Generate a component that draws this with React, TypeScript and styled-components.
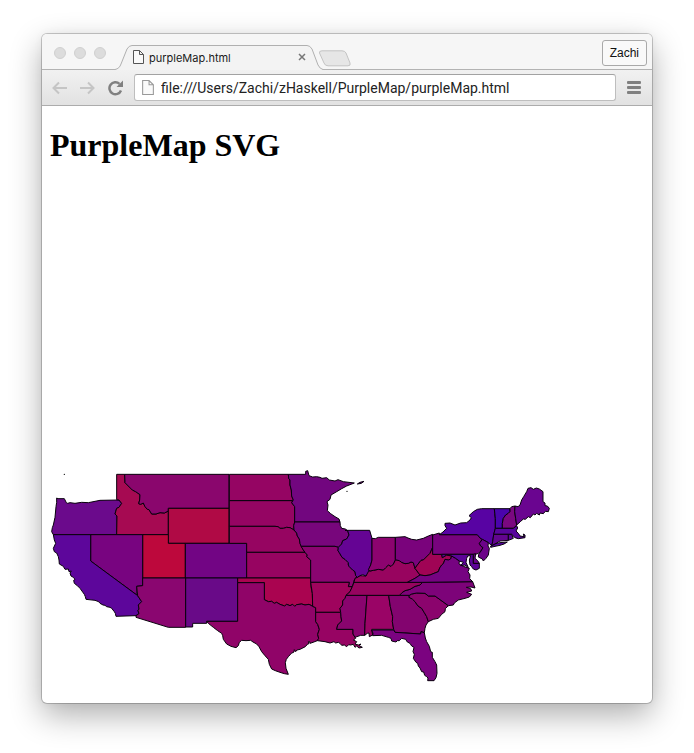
import React from "react";
import styled, { createGlobalStyle } from "styled-components";

const GlobalStyle = createGlobalStyle`
  * { box-sizing: border-box; }
  body { margin: 0; background: #fff; }
  button, input { font: inherit; color: inherit; }
`;

const Desktop = styled.div`
  display: flex;
  min-height: 100vh;
  padding: 34px 42px 50px;
`;

const BrowserWindow = styled.section`
  flex: 1;
  min-width: 0;
  display: flex;
  flex-direction: column;
  overflow: hidden;
  border-radius: 5px;
  background: #fff;
  box-shadow: 0 0 0 1px rgba(0, 0, 0, 0.2), 0 12px 32px rgba(0, 0, 0, 0.32), 0 0 10px rgba(0, 0, 0, 0.05);
`;

const TabStrip = styled.header`
  display: flex;
  align-items: flex-end;
  height: 36px;
  padding: 0 5px 0 12px;
  background: #f6f6f6;
  box-shadow: inset 0 -1px #b3b3b3;
  font-family: Inter, "Liberation Sans", sans-serif;
`;

const WindowControls = styled.div`
  display: flex;
  align-self: center;
  gap: 8px;
  margin-top: 2px;
  margin-right: 9px;
`;

const WindowControl = styled.button`
  width: 12px;
  height: 12px;
  padding: 0;
  border: 1px solid #d0d0d0;
  border-radius: 50%;
  background: #dcdcdc;
`;

const Tab = styled.div`
  position: relative;
  display: flex;
  align-items: center;
  width: 208px;
  height: 26px;
  padding: 0 17px 0 18px;
  font-size: 11px;
  color: #1b1b1b;
`;

const TabShape = styled.svg`
  position: absolute;
  inset: 0;
  width: 100%;
  height: 100%;
`;

const TabIcon = styled.span`
  position: relative;
  display: flex;
`;

const TabTitle = styled.span`
  position: relative;
  flex: 1;
  margin-top: 2px;
  margin-left: 5px;
  white-space: nowrap;
`;

const IconButton = styled.button`
  position: relative;
  display: flex;
  align-items: center;
  justify-content: center;
  padding: 0;
  border: 0;
  background: none;
`;

const NewTab = styled(IconButton)`
  align-self: center;
  margin-top: 12px;
  margin-left: -5px;
`;

const Profile = styled.button`
  align-self: flex-start;
  height: 26px;
  margin-top: 6px;
  margin-left: auto;
  padding: 0 7px;
  border: 1px solid #a9a9a9;
  border-radius: 3px;
  background: #f9f9f9;
  font-family: "Liberation Sans", sans-serif;
  font-size: 12px;
  color: #111;
`;

const Toolbar = styled.nav`
  display: flex;
  align-items: center;
  gap: 11px;
  height: 36px;
  padding: 0 11px 0 9px;
  border-bottom: 1px solid #acacac;
  background: linear-gradient(#f1f1f1, #e2e2e2);
`;

const AddressBar = styled.label`
  flex: 1;
  min-width: 0;
  display: flex;
  align-items: center;
  gap: 7px;
  height: 27px;
  padding: 0 7px;
  border: 1px solid #bebebe;
  border-top-color: #a2a2a2;
  border-radius: 3px;
  background: #fff;
`;

const AddressInput = styled.input`
  flex: 1;
  min-width: 0;
  padding: 0;
  border: 0;
  outline: 0;
  background: none;
  font-family: Roboto, "Liberation Sans", sans-serif;
  font-size: 14px;
  color: #222;
`;

const Page = styled.main`
  flex: 1;
  padding: 21px 8px 8px;
`;

const Heading = styled.h1`
  margin: 0 0 21px;
  font: bold 32px/37px "Liberation Serif", serif;
  color: #000;
`;

const Map = styled.svg`
  display: block;
  width: 100%;
  max-width: 510px;
`;

const PageIcon = ({ stroke, large = false }: { stroke: string; large?: boolean }) => (
  <svg
    width={large ? 12 : 11}
    height={large ? 15 : 14}
    viewBox="0 0 11 14"
    fill="#fafafa"
    stroke={stroke}
  >
    <path d="M.5 .5H6.500L10.500 4.500V13.500H.5Z M6.500 .5V4.500H10.500" />
  </svg>
);

interface StateShape {
  id: string;
  fill: string;
  d: string;
}

const states: StateShape[] = [
  { id: "OR", fill: "#6b0a8c", d: "M20,99 24,101 43,101 49,113 53,115 60,113 75,115 95,112 115,113 150,106 207,105 215,115 207,127 200,130 195,147 201,153 200,209 10,209 5,200 7,188 10,180 15,157 18,125 20,112Z" },
  { id: "ID", fill: "#a60a52", d: "M200,28 224,28 225,53 232,60 247,75 257,80 270,89 269,105 266,116 272,118 280,114 285,125 292,133 297,134 305,147 318,147 330,143 343,144 355,138 355,209 200,209 201,153 195,147 200,130 207,127 215,115 207,105 200,104Z" },
  { id: "MT", fill: "#8a066d", d: "M224,28H537V130H355V138L343,144 330,143 318,147 305,147 297,134 292,133 285,125 280,114 272,118 266,116 269,105 270,89 257,80 247,75 232,60 225,53Z" },
  { id: "WY", fill: "#b00a45", d: "M355,130H537V235H355Z" },
  { id: "UT", fill: "#bd083c", d: "M278,209H355V235H406V339H278Z" },
  { id: "CO", fill: "#720584", d: "M406,235H590V339H406Z" },
  { id: "NV", fill: "#780480", d: "M122,209H278V362L260,364 261,385 263,392 122,288Z" },
  { id: "CA", fill: "#5d069b", d: "M10,209H122V288L263,392 275,410 265,420 267,432 264,437 267,446 258,452 198,454 196,445 193,440 185,430 180,427 170,425 165,421 159,420 150,415 146,410 135,406 108,403 106,395 103,388 90,370 82,362 73,355 71,346 75,343 70,337 63,333 60,324 64,318 57,320 55,312 45,313 40,304 28,297 27,285 25,275 20,264 13,260 10,250 17,235 13,225Z" },
  { id: "AZ", fill: "#8a0670", d: "M278,339H407V487H355L258,457 258,452 267,446 264,437 267,432 265,420 275,410 263,392 260,364 278,362Z" },
  { id: "NM", fill: "#690a88", d: "M407,339H563V469H470V475H428V486H407Z" },
  { id: "ND", fill: "#950563", d: "M538,28H715L716,40 720,45 720,60 724,75 725,93 730,105 728,107H538Z" },
  { id: "SD", fill: "#950563", d: "M538,107H728L725,113 734,125V173L731,182 732,195 720,188 710,187 700,190 690,190 684,185 675,184H538Z" },
  { id: "NE", fill: "#960561", d: "M538,184H675L684,185 690,190 700,190 710,187 720,188 732,195 740,204 742,213 748,222 750,235 755,245 760,255 765,262H590V235H538Z" },
  { id: "KS", fill: "#970461", d: "M590,262H765L772,270 770,275 782,285V339H590Z" },
  { id: "OK", fill: "#aa0450", d: "M563,339H782L783,365 787,385 788,424 777,418 765,420 755,417 740,419 734,424 728,418 720,422 710,418 704,423 690,418 680,412 673,415 665,409 655,410 643,404V353H563Z" },
  { id: "TX", fill: "#900468", d: "M563,353H643V404L655,410 665,409 673,415 680,412 690,418 704,423 710,418 720,422 728,418 734,424 740,419 755,417 765,420 777,418 788,424 797,428V470L803,478 808,493 803,508 806,520 802,527 789,532 780,535 779,530 775,530 777,536 773,537 766,545 750,553 741,555 737,560 733,554 732,561 724,565 715,575 709,583 706,593 708,610 715,628 703,626 690,622 676,617 665,612 658,598 655,583 645,572 635,560 627,545 620,537 609,531 602,526 588,527 575,526 568,532 565,542 558,548 543,544 530,537 520,523 518,512 515,505 503,497 490,487 475,475 470,469H563Z" },
  { id: "MN", fill: "#72067f", d: "M715,28H767V19L773,17 777,32 788,36 800,35 810,37 816,40 830,38 838,45 855,48 864,44 880,50 913,54 890,63 875,71 860,80 843,90 840,103 831,110 834,120 832,137 842,146 855,155 867,162 870,171H734V125L725,113 730,105 725,93 724,75 720,60 720,45 716,40Z" },
  { id: "IA", fill: "#78067c", d: "M734,171H870L871,182 875,190 886,192 893,197 897,210 890,222 878,227 875,237 865,247 855,244H753L750,235 748,222 742,213 740,204 732,195 731,182Z" },
  { id: "MO", fill: "#8a0570", d: "M753,244H855L865,247 864,257 868,263 876,277 885,283 895,293 895,300 898,305 908,315 915,320 917,332 922,337 915,340 912,347 910,355 907,365H895L898,352H782V285L770,275 772,270 765,262 760,255Z" },
  { id: "AR", fill: "#9f045d", d: "M782,352H898L895,365H907L900,380 890,390 885,400 878,408 878,420 870,430 872,442H797V428L788,424 787,385Z" },
  { id: "LA", fill: "#970463", d: "M797,442H872L873,455 875,468 863,480 860,493H909V507L917,520 910,525 920,530 915,537 925,540 933,537 928,542 937,547 927,549 920,543 915,547 910,538 902,540 896,539 890,545 883,540 875,541 870,535 865,532 857,534 852,530 846,532 840,534 825,530 810,528 802,527 806,520 803,508 808,493 803,478 797,470Z" },
  { id: "MS", fill: "#89046e", d: "M888,391H951L945,475 944,511 932,511 915,517 909,507V493H860L863,480 875,468 873,455 872,442 870,430 878,420 878,408 885,400Z" },
  { id: "AL", fill: "#9a0466", d: "M951,391H1016L1021,425 1028,455 1027,470 1031,493H965L968,510 958,515 957,504 952,505 944,511 945,475Z" },
  { id: "GA", fill: "#83046f", d: "M1016,391H1078L1077,397 1087,402 1095,410 1104,423 1115,430 1123,443 1130,455 1135,470 1128,480 1125,490 1123,503 1113,500 1112,507 1035,502 1031,493 1027,470 1028,455 1021,425Z" },
  { id: "FL", fill: "#7b0380", d: "M965,495H1031L1035,502 1112,507 1113,500 1123,503 1126,519 1130,530 1138,544 1142,560 1147,562 1147,577 1155,590 1160,600 1161,625 1158,638 1152,647 1133,647 1134,639 1130,635 1124,631 1121,621 1115,620 1110,609 1105,603 1103,595 1098,592 1090,580 1093,568 1089,560 1092,547 1085,543 1080,535 1072,531 1067,523 1055,520 1048,527 1042,527 1038,531 1025,528 1023,520 1015,517 995,511 968,512 969,505Z" },
  { id: "SC", fill: "#8b046d", d: "M1078,391 1085,387 1100,384 1125,385 1135,393 1155,393 1195,422 1186,431 1185,440 1175,448 1165,460 1150,463 1135,470 1130,455 1123,443 1115,430 1104,423 1095,410 1087,402 1077,397Z" },
  { id: "NC", fill: "#7d0379", d: "M1118,352 1268,350 1275,369 1263,366 1249,367 1262,371 1265,378 1250,382 1265,388 1258,396 1245,400 1225,405 1213,414 1210,420 1195,422 1155,393 1135,393 1125,385 1100,384 1085,387 1078,391H1048L1057,382 1065,377 1080,373 1095,364 1110,360Z" },
  { id: "TN", fill: "#96045f", d: "M912,352H1118L1110,360 1095,364 1080,373 1065,377 1057,382 1048,391H888L900,380 907,365Z" },
  { id: "KY", fill: "#98045f", d: "M915,340 922,337 930,332 948,333 950,319 960,318 970,316 985,313 1000,315 1007,308 1015,300 1023,304 1030,297 1037,284 1048,287 1055,292 1065,296 1075,295 1083,291 1090,293 1095,310 1110,330 1095,340 1072,352H912Z" },
  { id: "IL", fill: "#650494", d: "M885,196H959L966,220V285L962,300 955,320 948,333 938,329 930,332 922,337 917,332 915,320 908,315 898,305 895,300 895,293 885,283 876,277 868,263 864,257 865,247 875,237 878,227 890,222 897,210 893,197Z" },
  { id: "IN", fill: "#8c036f", d: "M966,220 976,221 985,217H1036V284L1030,297 1023,304 1015,300 1007,308 1000,315 985,313 970,316 960,318 955,314 962,300 966,285Z" },
  { id: "OH", fill: "#7a037c", d: "M1036,217 1065,215 1074,219 1085,223 1100,225 1120,220 1135,213 1148,208V247L1140,265 1132,273 1120,285 1113,286 1102,300 1095,310 1090,293 1083,291 1075,295 1065,296 1055,292 1048,287 1036,284Z" },
  { id: "WV", fill: "#a00455", d: "M1148,247V268H1175L1177,278 1190,270 1205,273 1202,282 1195,285 1185,283 1180,296 1175,300 1169,309 1165,320 1152,325 1140,330 1125,332 1110,330 1095,310 1102,300 1113,286 1120,285 1132,273 1140,265Z" },
  { id: "VA", fill: "#760381", d: "M1072,352 1095,340 1110,330 1125,332 1140,330 1152,325 1165,320 1169,309 1175,300 1180,296 1185,283 1195,285 1202,282 1205,273 1217,280 1228,288 1227,297 1240,304 1258,310 1254,320 1260,330 1259,341 1268,350 1118,352Z" },
  { id: "PA", fill: "#78037e", d: "M1148,210 1168,204V209H1282L1290,219 1297,223 1288,235 1292,243 1299,248 1293,258 1285,265 1277,268H1148Z" },
  { id: "NY", fill: "#5803a3", d: "M1168,209 1179,201 1190,190 1185,182V175L1200,174 1215,180 1232,174 1250,173 1260,165 1264,158 1257,152 1270,140 1282,133 1295,131H1333L1334,145 1336,160 1336,190 1331,210 1328,232 1325,242 1315,233 1297,223 1290,219 1282,209Z" },
  { id: "LI", fill: "#5803a3", d: "M1322,243 1337,236 1350,233 1372,231 1362,237 1350,241 1335,244 1322,247Z" },
  { id: "NJ", fill: "#6c0389", d: "M1297,223 1315,233 1314,243 1318,250 1315,270 1308,280 1300,288 1297,282 1285,276 1286,268 1293,258 1299,248 1292,243 1288,235Z" },
  { id: "VT", fill: "#4a04ac", d: "M1333,131H1380L1380,140 1375,145 1367,150 1360,160 1357,175 1357,190H1336V160Z" },
  { id: "NH", fill: "#7b0880", d: "M1380,131 1385,125 1395,123 1394,140 1397,160 1400,180 1390,190H1357V175L1360,160 1367,150 1375,145 1380,140Z" },
  { id: "ME", fill: "#6a0590", d: "M1395,123 1404,125 1410,120 1415,105 1421,95 1430,80 1434,70 1443,68 1450,73 1459,69 1468,72 1479,80V110L1485,114 1485,122 1492,123 1498,130 1495,140 1486,139 1480,146 1470,144 1468,150 1460,145 1455,150 1450,147 1441,158 1435,155 1426,163 1420,162 1411,170 1400,180 1397,160 1394,140Z" },
  { id: "MA", fill: "#57059c", d: "M1336,190H1390L1400,182 1403,189 1398,198 1405,205 1410,213 1422,215 1420,207 1425,210 1425,218 1405,221 1395,218 1385,208H1331Z" },
  { id: "CT", fill: "#63058f", d: "M1331,208H1375V226L1350,228 1338,235 1325,242 1328,230Z" },
  { id: "RI", fill: "#59059a", d: "M1375,208H1385L1390,220 1383,223 1375,226Z" },
  { id: "MD", fill: "#5c0497", d: "M1175,268H1270V295H1288L1288,310 1278,315 1270,312 1264,304 1260,300 1258,285 1262,272 1253,273 1250,280 1248,292 1255,308 1245,300 1232,302 1240,292 1228,288 1217,280 1205,273 1190,270 1177,278Z" },
  { id: "DE", fill: "#6a048b", d: "M1270,268 1277,266 1275,280 1283,287 1288,295H1270Z" },
  { id: "IR", fill: "#72067f", d: "M922,57 930,52 942,49 934,55Z" },
];

const PurpleMap = () => (
  <Map viewBox="0 -840 1530 1530" role="img" aria-label="United States map">
    <g stroke="#08000c" strokeWidth="3" strokeLinejoin="round">
      {states.map((s) => (
        <path key={s.id} d={s.d} fill={s.fill} />
      ))}
    </g>
    <circle cx="891" cy="79" r="2" />
    <circle cx="43" cy="28" r="2" />
  </Map>
);

export default function App() {
  return (
    <Desktop>
      <GlobalStyle />
      <BrowserWindow>
        <TabStrip>
          <WindowControls>
            <WindowControl aria-label="Close window" />
            <WindowControl aria-label="Minimize window" />
            <WindowControl aria-label="Zoom window" />
          </WindowControls>
          <Tab>
            <TabShape viewBox="0 0 208 26" preserveAspectRatio="none">
              <path d="M0 25.500C3 25 5 23 6 20L12 5Q14 1.500 17 1.500H192Q195 1.500 197 5L203 21Q205 25 208 25.500V26H0Z" fill="#f3f3f3" />
              <path d="M0 25.500C3 25 5 23 6 20L12 5Q14 1.500 17 1.500H192Q195 1.500 197 5L203 21Q205 25 208 25.500" fill="none" stroke="#b0b0b0" />
            </TabShape>
            <TabIcon>
              <PageIcon stroke="#555" />
            </TabIcon>
            <TabTitle>purpleMap.html</TabTitle>
            <IconButton aria-label="Close tab">
              <svg width="8" height="8" viewBox="0 0 8 8" stroke="#777" strokeWidth="1.500">
                <path d="M1 1 7 7M7 1 1 7" />
              </svg>
            </IconButton>
          </Tab>
          <NewTab aria-label="New tab">
            <svg width="34" height="17" viewBox="0 0 34 17">
              <path d="M4 .8H24Q27 .8 28 3L32 13Q33 15.800 30 15.800H10Q7 15.800 6 13L1.500 3Q1 .8 4 .8Z" fill="#e6e6e6" stroke="#c3c3c3" />
            </svg>
          </NewTab>
          <Profile>Zachi</Profile>
        </TabStrip>
        <Toolbar>
          <IconButton aria-label="Back">
            <svg width="17" height="14" viewBox="0 0 17 14" fill="none" stroke="#c5c5c5" strokeWidth="2">
              <path d="M16 7H2.500M8 1.500 2.500 7 8 12.500" />
            </svg>
          </IconButton>
          <IconButton aria-label="Forward">
            <svg width="17" height="14" viewBox="0 0 17 14" fill="none" stroke="#c5c5c5" strokeWidth="2">
              <path d="M1 7H14.500M9 1.500 14.500 7 9 12.500" />
            </svg>
          </IconButton>
          <IconButton aria-label="Reload">
            <svg width="16" height="16" viewBox="0 0 16 16">
              <path d="M14 10.500A6 6 0 1 1 12.500 3.800" fill="none" stroke="#808080" strokeWidth="2.500" />
              <path d="M16 .5V7H9.500Z" fill="#808080" />
            </svg>
          </IconButton>
          <AddressBar>
            <PageIcon stroke="#999" large />
            <AddressInput aria-label="Address" defaultValue="file:///Users/Zachi/zHaskell/PurpleMap/purpleMap.html" />
          </AddressBar>
          <IconButton aria-label="Menu">
            <svg width="14" height="14" viewBox="0 0 14 14" fill="#808080">
              <rect y="0" width="14" height="3" rx="1" />
              <rect y="5" width="14" height="3" rx="1" />
              <rect y="10" width="14" height="3" rx="1" />
            </svg>
          </IconButton>
        </Toolbar>
        <Page>
          <Heading>PurpleMap SVG</Heading>
          <PurpleMap />
        </Page>
      </BrowserWindow>
    </Desktop>
  );
}
